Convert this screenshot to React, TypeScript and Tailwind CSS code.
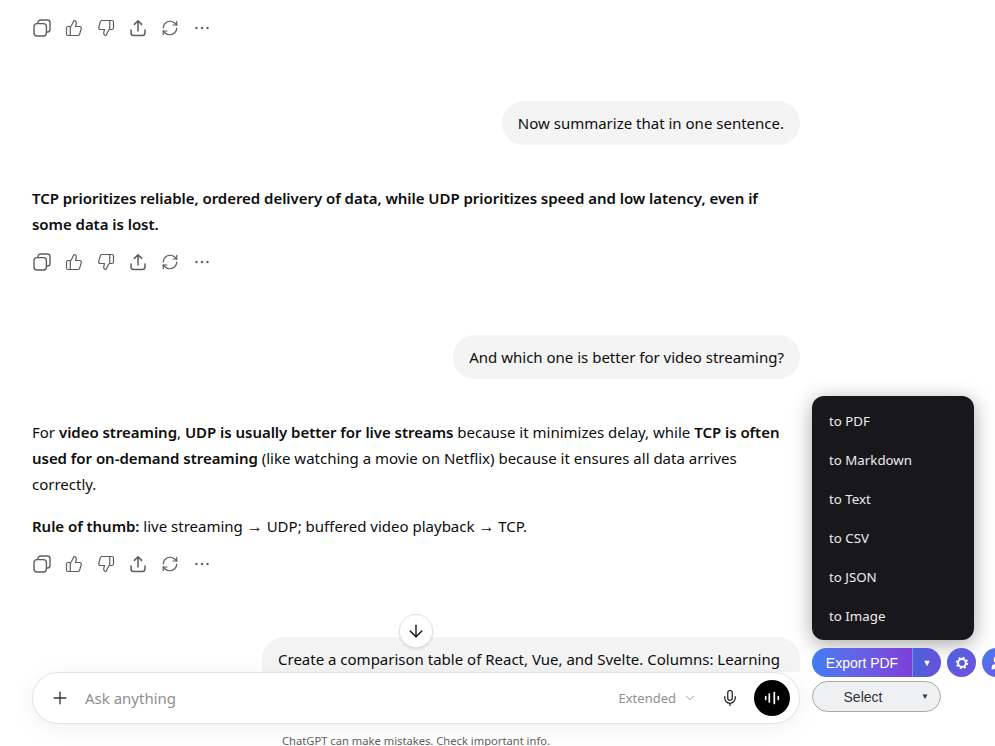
import React from "react";
import { Plus, ChevronDown, Mic, ArrowDown, User, ThumbsUp, ThumbsDown, RefreshCw } from "lucide-react";

const font = "font-['Noto_Sans','Liberation_Sans',sans-serif]";

function CopyIcon() {
  return (
    <svg width="18" height="18" viewBox="0 0 18 18" fill="none" stroke="currentColor" strokeWidth="1.4" strokeLinejoin="round">
      <rect x="1" y="4.6" width="12.4" height="12.4" rx="3" />
      <path d="M5 4.6V3.6A2.6 2.6 0 0 1 7.6 1h6.8A2.6 2.6 0 0 1 17 3.6v6.8a2.6 2.6 0 0 1-2.6 2.6h-1" />
    </svg>
  );
}

function ShareIcon() {
  return (
    <svg width="18" height="18" viewBox="0 0 18 18" fill="none" stroke="currentColor" strokeWidth="1.5" strokeLinecap="round" strokeLinejoin="round">
      <path d="M9 12V2M5.4 5.4 9 1.8l3.6 3.6" />
      <path d="M2 11v2.7A2.8 2.8 0 0 0 4.8 16.5h8.4a2.8 2.8 0 0 0 2.8-2.8V11" />
    </svg>
  );
}

function Dots() {
  return (
    <svg width="18" height="18" viewBox="0 0 18 18" fill="currentColor">
      <circle cx="3.5" cy="9" r="1.2" />
      <circle cx="9" cy="9" r="1.2" />
      <circle cx="14.5" cy="9" r="1.2" />
    </svg>
  );
}

function Gear() {
  return (
    <svg width="16" height="16" viewBox="0 0 16 16" fill="none" stroke="currentColor">
      <circle cx="8" cy="8" r="3.9" strokeWidth="2" />
      <circle cx="8" cy="8" r="5.4" strokeWidth="1.6" strokeDasharray="2 2.24" />
    </svg>
  );
}

function Actions() {
  return (
    <div className="-ml-1.5 flex h-8 items-center text-[#5d5d5d]">
      <span className="flex h-8 w-8 items-center justify-center"><CopyIcon /></span>
      <span className="flex h-8 w-8 items-center justify-center"><ThumbsUp size={18} strokeWidth={1.6} /></span>
      <span className="flex h-8 w-8 items-center justify-center"><ThumbsDown size={18} strokeWidth={1.6} /></span>
      <span className="flex h-8 w-8 items-center justify-center"><ShareIcon /></span>
      <span className="flex h-8 w-8 items-center justify-center"><RefreshCw size={18} strokeWidth={1.6} /></span>
      <span className="flex h-8 w-8 items-center justify-center"><Dots /></span>
    </div>
  );
}

function Bubble({ children, className = "" }: { children: React.ReactNode; className?: string }) {
  return (
    <div className="flex justify-end">
      <div className={`rounded-[22px] bg-[#f4f4f4] px-4 py-2.5 leading-6 text-[#0d0d0d] ${className}`}>{children}</div>
    </div>
  );
}

function B({ children }: { children: React.ReactNode }) {
  return <strong className="font-semibold tracking-[-0.04px]">{children}</strong>;
}

const Arrow = () => <span className="font-['Liberation_Sans'] text-[16px] leading-none">→</span>;

const exportsList = ["to PDF", "to Markdown", "to Text", "to CSV", "to JSON", "to Image"];

export default function App() {
  return (
    <div className={`relative h-[746px] w-[995px] overflow-hidden bg-white text-[15px] leading-[26px] text-[#0d0d0d] ${font}`}>
      <div className="ml-8 w-[768px] pt-3">
        <Actions />
        <div className="mt-[57px]">
          <Bubble>Now summarize that in one sentence.</Bubble>
        </div>
        <p className="mt-10">
          <B>TCP prioritizes reliable, ordered delivery of data, while UDP prioritizes speed and low latency, even if some data is lost.</B>
        </p>
        <div className="mt-[9px]"><Actions /></div>
        <div className="mt-[57px]">
          <Bubble>And which one is better for video streaming?</Bubble>
        </div>
        <p className="mt-10">
          For <B>video streaming</B>, <B>UDP is usually better for live streams</B> because it minimizes delay, while <B>TCP is often used for on-demand streaming</B> (like watching a movie on Netflix) because it ensures all data arrives correctly.
        </p>
        <p className="mt-4">
          <B>Rule of thumb:</B> live streaming <Arrow /> UDP; buffered video playback <Arrow /> TCP.
        </p>
        <div className="mt-[9px]"><Actions /></div>
        <div className="mt-[57px]">
          <Bubble className="w-[538px]">Create a comparison table of React, Vue, and Svelte. Columns: Learning curve, performance, ecosystem, and best use case.</Bubble>
        </div>
      </div>

      {/* area below the composer */}
      <div className="absolute bottom-0 left-0 h-[74px] w-[810px] bg-white" />

      {/* scroll to bottom */}
      <div className="absolute left-[399px] top-[614px] flex h-[34px] w-[34px] items-center justify-center rounded-full border border-[#e5e5e5] bg-white text-[#0d0d0d] shadow-sm">
        <ArrowDown size={20} strokeWidth={1.6} />
      </div>

      {/* composer */}
      <div className="absolute left-8 top-[672px] flex h-[52px] w-[768px] items-center rounded-[26px] border border-[#e3e3e3] bg-white pl-[17px] pr-[9px] shadow-[0_4px_24px_rgba(0,0,0,0.06)]">
        <Plus size={20} strokeWidth={1.6} className="text-[#333]" />
        <span className="ml-[15px] text-[#8f8f8f]">Ask anything</span>
        <span className="ml-auto flex items-center gap-[7px] text-[13px] text-[#8f8f8f]">
          Extended <ChevronDown size={14} strokeWidth={1.5} />
        </span>
        <Mic size={18} strokeWidth={1.6} className="ml-[24px] text-[#1a1a1a]" />
        <span className="ml-[15px] flex h-9 w-9 items-center justify-center rounded-full bg-black text-white">
          <svg width="18" height="18" viewBox="0 0 18 18" fill="none" stroke="currentColor" strokeWidth="1.7" strokeLinecap="round">
            <path d="M2.7 7.5v3M6.3 5v8M11.3 3.5v11M15.3 7.5v3" />
          </svg>
        </span>
      </div>

      <div className="absolute left-0 top-[733px] w-[832px] text-center text-[11.2px] leading-4 text-[#5d5d5d]">
        ChatGPT can make mistakes. Check important info.
      </div>

      {/* export menu */}
      <div className="absolute left-[812px] top-[396px] flex h-[244px] w-[162px] flex-col gap-[7px] rounded-xl bg-[#18181c] px-[17px] pb-[8px] pt-[9px] text-[13.3px] text-[#ececee] shadow-[0_4px_20px_rgba(0,0,0,0.35)]">
        {exportsList.map((t) => (
          <div key={t} className="flex h-8 items-center">{t}</div>
        ))}
      </div>

      <div className="absolute left-[812px] top-[648px] flex w-[200px] flex-col gap-[4px] font-['Liberation_Sans',sans-serif]">
        <div className="flex items-center">
          <div className="flex h-[29px] w-[129px] shrink-0 items-center overflow-hidden rounded-full text-[14px] text-white">
            <span className="flex h-full w-[100px] items-center justify-center bg-gradient-to-r from-[#3f7cf2] to-[#7c3ed8]">Export PDF</span>
            <span className="flex h-full flex-1 items-center justify-center border-l border-white/30 bg-gradient-to-r from-[#4a62dc] to-[#6650dc] text-[9px]">▼</span>
          </div>
          <span className="ml-[6px] flex h-[29px] w-[29px] shrink-0 items-center justify-center rounded-full bg-gradient-to-br from-[#4a62dc] to-[#6f4fe0] text-white">
            <Gear />
          </span>
          <span className="ml-[6px] flex h-[29px] w-[29px] shrink-0 items-center justify-center rounded-full bg-gradient-to-br from-[#3f7cf2] to-[#6f4fe0] text-white">
            <User size={16} fill="currentColor" />
          </span>
        </div>
        <div className="relative flex h-[31px] w-[129px] items-center rounded-full border border-[#a9a9a9] bg-[#eef0f1] text-[14px] text-[#333]">
          <span className="w-[100px] text-center">Select</span>
          <span className="ml-[8px] text-[8px]">▼</span>
        </div>
      </div>
    </div>
  );
}
